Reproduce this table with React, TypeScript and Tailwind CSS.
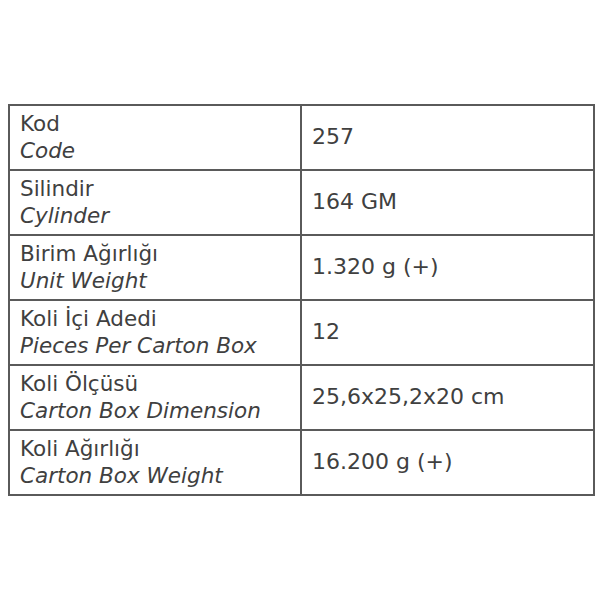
const rows = [
    { tr: 'Kod', en: 'Code', value: '257' },
    { tr: 'Silindir', en: 'Cylinder', value: '164 GM' },
    { tr: 'Birim Ağırlığı', en: 'Unit Weight', value: '1.320 g (+)' },
    { tr: 'Koli İçi Adedi', en: 'Pieces Per Carton Box', value: '12' },
    { tr: 'Koli Ölçüsü', en: 'Carton Box Dimension', value: '25,6x25,2x20 cm' },
    { tr: 'Koli Ağırlığı', en: 'Carton Box Weight', value: '16.200 g (+)' },
];

export default function App() {
    return (
        <div className="h-[600px] w-[600px] bg-white pl-[8px] pt-[104px] font-['DejaVu_Sans',sans-serif] text-[#404040]">
            <table className="w-[587px] table-fixed border-collapse border-2 border-[#5a5a5a]">
                <tbody>
                    {rows.map((row) => (
                        <tr key={row.en} className="h-[65px]">
                            <td className="w-[292px] border-2 border-[#5a5a5a] px-[10px] pt-[2px] pb-[4px] align-middle text-[21.5px] leading-[27px]">
                                <div>{row.tr}</div>
                                <div className="italic">{row.en}</div>
                            </td>
                            <td className="border-2 border-[#5a5a5a] px-[10px] pb-[2px] align-middle text-[22px] leading-[27px]">
                                {row.value}
                            </td>
                        </tr>
                    ))}
                </tbody>
            </table>
        </div>
    );
}
